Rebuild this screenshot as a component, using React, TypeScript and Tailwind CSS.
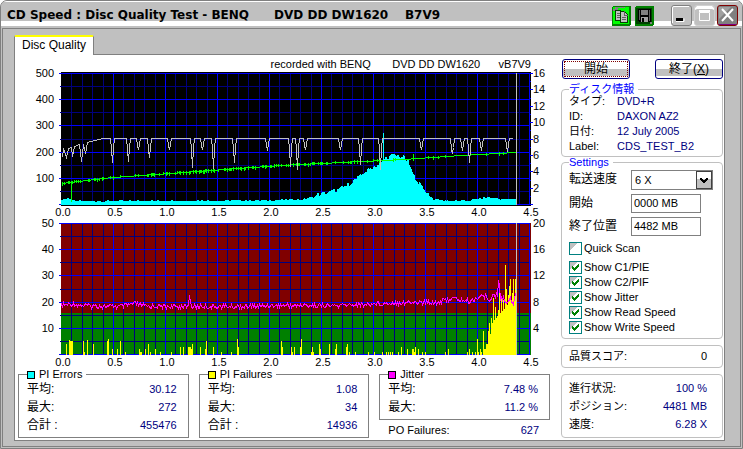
import type { ReactNode } from 'react'

type Point = [number, number]

const PLOT_LEFT = 46
const BASE_Y = 134

// dips of the write speed curve: [x, lowest y]
const writeDips: Point[] = [
  [51, 91], [67, 90], [77, 78], [88, 86], [108, 78], [131, 96], [141, 78], [152, 97],
  [173, 91], [206, 79], [229, 95], [236, 98], [244, 78], [279, 78], [299, 93], [319, 98],
  [360, 78], [391, 82], [401, 79], [408, 91], [420, 79], [446, 80],
]

const writeStart: Point[] = [
  [1, 86], [2, 77], [5, 86], [7, 77], [10, 76], [11, 85], [13, 75], [18, 73], [20, 90],
  [22, 73], [24, 82], [26, 71], [33, 69], [42, 67],
]

const readCurve: Point[] = [[0, 112], [51, 106], [109, 102], [219, 94], [342, 88], [400, 84], [454, 81]]

const pieCurve: Point[] = [
  [0, 5], [11, 5], [12, 3], [219, 4], [242, 5], [259, 9], [276, 13], [286, 18], [296, 25],
  [302, 30], [309, 35], [319, 39], [324, 45], [332, 48], [342, 46], [347, 41], [352, 28],
  [359, 18], [366, 10], [372, 5], [392, 3], [409, 4], [426, 7], [442, 5], [455, 5],
]

// [x, height]
const pifBars: Point[] = [
  [5, 11], [8, 15], [9, 14], [10, 14], [11, 14], [22, 14], [23, 3], [26, 15], [32, 11], [46, 14],
  [47, 16], [51, 6], [56, 6], [59, 14], [64, 3], [78, 6], [79, 3], [80, 3], [84, 6], [87, 11],
  [89, 3], [94, 6], [99, 3], [110, 3], [119, 8], [122, 8], [127, 8], [128, 8], [129, 8], [130, 6],
  [131, 11], [139, 8], [144, 6], [145, 14], [152, 8], [160, 3], [170, 3], [176, 16], [177, 8],
  [220, 14], [221, 8], [230, 8], [231, 3], [233, 8], [239, 8], [240, 16], [250, 3], [251, 8],
  [252, 3], [258, 11], [259, 6], [268, 11], [274, 6], [275, 11], [285, 8], [286, 11], [288, 3],
  [294, 3], [307, 3], [313, 3], [321, 3], [325, 3], [327, 3], [329, 3], [331, 3], [337, 3],
  [340, 8], [346, 6], [351, 6], [352, 6], [353, 3], [354, 8], [357, 6], [361, 3], [364, 3],
  [384, 3], [387, 6], [406, 3], [408, 6], [411, 3], [414, 3], [416, 16], [417, 3], [419, 6],
  [420, 3], [422, 24], [423, 6], [424, 6], [425, 11], [426, 11], [427, 8], [427, 24], [428, 32],
  [429, 14], [430, 37], [432, 57], [434, 48], [435, 37], [437, 45], [438, 62], [440, 58], [442, 55],
  [444, 90], [445, 66], [447, 60], [448, 69], [449, 76], [451, 62], [452, 76], [454, 76],
]

const pifFill: Point[] = [
  [427, 0], [427, 8], [429, 12], [430, 30], [433, 34], [436, 38], [440, 43], [444, 46],
  [448, 52], [455, 58], [455, 0],
]

const jitterCurve: Point[] = [
  [0, 84], [11, 82], [20, 84], [60, 85], [74, 82], [84, 85], [127, 85], [200, 85], [209, 84],
  [276, 84], [342, 81], [376, 81], [389, 77], [409, 80], [419, 74], [426, 77], [437, 74],
  [439, 77], [449, 79], [452, 81], [455, 66],
]

function noise(i: number) {
  const v = Math.sin(i * 12.9898) * 43758.5453
  return v - Math.floor(v)
}

function valueAt(curve: Point[], x: number) {
  for (let i = 1; i < curve.length; i++) {
    const [x0, y0] = curve[i - 1]
    const [x1, y1] = curve[i]
    if (x <= x1) return x1 === x0 ? y1 : y0 + ((y1 - y0) * (x - x0)) / (x1 - x0)
  }
  return curve[curve.length - 1][1]
}

function toPoints(points: Point[]) {
  return points.map(([x, y]) => `${PLOT_LEFT + x + 0.5},${y + 0.5}`).join(' ')
}

const writePoints: Point[] = [
  ...writeStart,
  ...writeDips.flatMap(([x, y]): Point[] => [[x - 2, 67], [x - 1, y > 80 ? 78 : 74], [x, y], [x + 1, y > 80 ? 76 : 73], [x + 2, 67]]),
  [451, 67],
]

const readPoints: Point[] = Array.from({ length: 455 }, (_, x) => [x, Math.round(valueAt(readCurve, x))])

const jitterPoints: Point[] = Array.from({ length: 455 }, (_, x) => {
  if (x === 128) return [x, 74]
  if (x === 129) return [x, 80]
  if (x === 437) return [x, 59]
  if (x === 438) return [x, 63]
  return [x, Math.round(valueAt(jitterCurve, x) + (noise(x) - 0.5) * (x > 400 ? 7 : 5))]
})

const pieHeights = Array.from({ length: 455 }, (_, x) => {
  const h = valueAt(pieCurve, x)
  return Math.round(h + noise(Math.floor(x / 2) + 7) * (h > 8 ? 4 : 1.6))
})

function Grid({ step, color, tick }: { step: number; color: string; tick: number }) {
  const columns = Array.from({ length: Math.round(9 * step) }, (_, i) => Math.round(((i + 1) * 52) / step))
  const rowsPerMajor = step > 1 ? 2 : 1
  const rows = Array.from({ length: 5 * rowsPerMajor + 1 }, (_, i) => Math.round((i * 26.2) / rowsPerMajor))
  return (
    <g fill={color}>
      {columns.map((x) => (
        <rect key={x} x={PLOT_LEFT + x} y="2" width="1" height="132" />
      ))}
      {rows.map((y) => (
        <rect key={y} x={PLOT_LEFT - tick} y={2 + y} width={468 + tick} height="1" />
      ))}
    </g>
  )
}

function Chart({
  label,
  leftLabels,
  rightLabels,
  rightTicks,
  background,
  children,
}: {
  label: string
  leftLabels: string[]
  rightLabels: string[]
  rightTicks?: boolean
  background: ReactNode
  children: ReactNode
}) {
  const rightStep = 131 / (rightTicks ? 8 : 5)
  return (
    <svg viewBox="0 0 540 148" role="img" aria-label={label} className="block w-full overflow-visible text-[11px]">
      <g shapeRendering="crispEdges" fill="none">
        {background}
        <Grid step={5} color="#000080" tick={1} />
        <Grid step={1} color="#0000ff" tick={2} />
        {rightTicks &&
          Array.from({ length: 17 }, (_, i) => (
            <path key={i} d={`M${i % 2 ? 515 : 514} ${2.5 + Math.round(i * 8.2)}H${i % 2 ? 516 : 518}`} stroke="#0000ff" />
          ))}
        {children}
      </g>
      {leftLabels.map((text, i) => (
        <text key={text} x="39" y={6 + Math.round(i * 26.2)} textAnchor="end">{text}</text>
      ))}
      {rightLabels.map((text, i) => (
        <text key={text} x="518" y={6 + Math.round(i * rightStep)}>{text}</text>
      ))}
      {['0.0', '0.5', '1.0', '1.5', '2.0', '2.5', '3.0', '3.5', '4.0', '4.5'].map((text, i) => (
        <text key={text} x={PLOT_LEFT + 2 + i * 52} y="145" textAnchor="middle">{text}</text>
      ))}
    </svg>
  )
}

function ErrorChart() {
  return (
    <Chart
      label="PI Errors"
      leftLabels={['500', '400', '300', '200', '100']}
      rightLabels={['16', '14', '12', '10', '8', '6', '4', '2']}
      rightTicks
      background={<rect x="46" y="1" width="470" height="134" fill="#000" />}
    >
      <path d={pieHeights.map((h, x) => `M${PLOT_LEFT + x + 0.5} ${BASE_Y}v${-h}`).join('')} stroke="#00ffff" />
      <path d={`M${PLOT_LEFT + 322 + 0.5} ${BASE_Y}V62`} stroke="#00ffff" />
      <polyline points={toPoints(readPoints)} stroke="#00ff00" />
      <path
        d={readPoints
          .filter(([x]) => noise(x + 3) > (x < 300 ? 0.6 : 0.9))
          .map(([x, y]) => `M${PLOT_LEFT + x + 0.5} ${y - 1}v${x > 35 && noise(x) > 0.7 ? 4 : 3}`)
          .join('')}
        stroke="#00ff00"
      />
      <path d={`M${PLOT_LEFT + 1.5} 111v4M${PLOT_LEFT + 10.5} 111V131M${PLOT_LEFT + 352.5} 83v7`} stroke="#00ff00" />
      <polyline points={toPoints(writePoints)} stroke="#c0c0c0" />
      <path d={`M${PLOT_LEFT + 455.5} 2V134`} stroke="#c0c0c0" />
    </Chart>
  )
}

function FailureChart() {
  return (
    <Chart
      label="PI Failures / Jitter"
      leftLabels={['50', '40', '30', '20', '10']}
      rightLabels={['20', '16', '12', '8', '4']}
      background={
        <>
          <rect x="46" y="2" width="470" height="90" fill="#800000" />
          <rect x="46" y="92" width="470" height="42" fill="#008000" />
        </>
      }
    >
      <polygon points={pifFill.map(([x, h]) => `${PLOT_LEFT + x},${BASE_Y - h}`).join(' ')} fill="#ffff00" />
      <path d={pifBars.map(([x, h]) => `M${PLOT_LEFT + x + 0.5} ${BASE_Y}v${-h}`).join('')} stroke="#ffff00" />
      <polyline points={toPoints(jitterPoints)} stroke="#ff00ff" />
      <path d={`M${PLOT_LEFT + 455.5} 2V134`} stroke="#c0c0c0" />
    </Chart>
  )
}

function StatBox({ title, swatch, rows }: { title: string; swatch: string; rows: string[][] }) {
  return (
    <fieldset className="min-w-0 border border-[#808080] pb-[3px] pl-2 pr-[11px]">
      <legend className="flex items-center gap-1 pr-1 leading-[11px]">
        <span className={`size-2 border border-black ${swatch}`} />
        {title}
      </legend>
      <dl>
        {rows.map(([name, value]) => (
          <div key={name} className="flex h-[18px] items-center justify-between">
            <dt className="text-[12px]">{name}</dt>
            <dd className="text-[#000080]">{value}</dd>
          </div>
        ))}
      </dl>
    </fieldset>
  )
}

function Check({ label, checked }: { label: string; checked?: boolean }) {
  return (
    <label className="flex h-[15px] items-center gap-[2px]">
      <span className="relative size-[13px]">
        <input
          type="checkbox"
          defaultChecked={checked}
          className="peer block size-[13px] appearance-none border border-[#008080] bg-[linear-gradient(135deg,#c0c0c0_36%,#fff_36%)]"
        />
        <svg viewBox="0 0 13 13" className="pointer-events-none absolute inset-0 hidden peer-checked:block" shapeRendering="crispEdges">
          <path d="M3 5h1v1h1v1h1v-1h1v-1h1v-1h1v-1h1v3h-1v1h-1v1h-1v1h-1v1h-1v-1h-1v-1h-1z" fill="#008000" />
        </svg>
      </span>
      {label}
    </label>
  )
}

function PositionField({ id, label, value }: { id: string; label: string; value: string }) {
  return (
    <div className="mt-1 flex h-[19px] items-center">
      <label htmlFor={id} className="w-[62px] text-[12px]">{label}</label>
      <input id={id} defaultValue={value} className="h-[19px] w-[70px] border border-[#808080] bg-white px-[2px] pb-[2px] outline-none" />
    </div>
  )
}

const discInfo = [
  ['タイプ:', 'DVD+R'],
  ['ID:', 'DAXON AZ2'],
  ['日付:', '12 July 2005'],
  ['Label:', 'CDS_TEST_B2'],
]

const progress = [
  ['進行状況:', '100 %'],
  ['ポジション:', '4481 MB'],
  ['速度:', '6.28 X'],
]

function TitleBar() {
  return (
    <header className="flex h-[27px] items-center bg-[linear-gradient(#fff_1px,#c0c0c0_1px,#c0c0c0_20px,#fff_20px,#fff_25px,#c0c0c0_25px)] pl-[6px] pr-1 pt-[2px]">
      <h1 className="flex-1 whitespace-pre font-['DejaVu_Sans'] text-[12px] font-bold">
        {'CD Speed : Disc Quality Test - BENQ      DVD DD DW1620    B7V9'}
      </h1>
      <div className="flex items-center">
        <button aria-label="Copy" className="mr-1">
          <svg width="19" height="20" viewBox="0 0 19 20" shapeRendering="crispEdges">
            <rect width="19" height="20" rx="2" fill="#008000" />
            <rect x="1" y="1" width="16" height="17" rx="1" fill="#00ff00" />
            <path d="M1 5v-2h2v-2h10v1h-7v2h-3v1z" fill="#808080" />
            <path d="M3.5 4.5h5l2 2v8h-7z" fill="#c0c0c0" stroke="#004000" />
            <path d="M8.5 5.5h4l3 3v8h-7z" fill="#c0c0c0" stroke="#004000" />
            <path d="M12.5 5v4h3M5 7.5h3M5 9.5h3M5 11.5h3M10 11.5h4M10 13.5h4" fill="none" stroke="#606060" />
          </svg>
        </button>
        <button aria-label="Save" className="mr-[17px]">
          <svg width="19" height="20" viewBox="0 0 19 20" shapeRendering="crispEdges">
            <rect width="19" height="20" rx="2" fill="#008000" />
            <rect x="1" y="2" width="16" height="16" fill="#004000" />
            <path d="M3 3h13v13h-12l-1-1z" fill="#000" />
            <path d="M4 4h1v10h-1zM14 4h1v11h-1z" fill="#606060" />
            <path d="M6 4h7v5h-7z" fill="#808080" />
            <path d="M6 11h7v5h-7z" fill="#a0a0a0" />
            <path d="M7 12h2v4h-2z" fill="#000" />
            <path d="M15 16h2v2h-2z" fill="#808080" />
          </svg>
        </button>
        <button aria-label="Minimize" className="mr-[2px]">
          <svg width="21" height="21" viewBox="0 0 21 21">
            <rect x="0.5" y="0.5" width="20" height="20" rx="2.5" fill="#c0c0c0" stroke="#808080" />
            <path d="M1.5 18V3Q1.5 1.5 3 1.5H18" fill="none" stroke="#fff" />
            <path d="M5 13h7v3h-7z" fill="#000" />
            <path d="M5 16.5h8v-3" fill="none" stroke="#fff" />
          </svg>
        </button>
        <button aria-label="Maximize" className="mr-[2px]">
          <svg width="21" height="21" viewBox="0 0 21 21">
            <rect x="0.5" y="0.5" width="20" height="20" rx="2.5" fill="#c0c0c0" stroke="#d0d0d0" />
            <path d="M1 5V3l2-2h15l2 2v2l-2-1H3z" fill="#fff" />
            <path d="M5.5 7.5h10v8h-10z" fill="none" stroke="#fff" />
            <path d="M5 6h11" stroke="#fff" strokeWidth="2" />
          </svg>
        </button>
        <button aria-label="Close">
          <svg width="21" height="21" viewBox="0 0 21 21">
            <rect x="0.5" y="0.5" width="20" height="20" rx="2.5" fill="#808080" stroke="#800000" />
            <path d="M2 19.5h17" stroke="#800080" />
            <path d="M2 14V2h12z" fill="#a0a0a0" />
            <path d="M5 4l11 12M16 4L5 16" stroke="#fff" strokeWidth="2" />
          </svg>
        </button>
      </div>
    </header>
  )
}

export default function App() {
  return (
    <div className="flex min-h-screen flex-col overflow-hidden rounded-t-[7px] border border-[#808080] bg-[#c0c0c0] font-['Liberation_Sans','Noto_Sans_CJK_JP',sans-serif] text-[11px] leading-[15px] text-black">
      <TitleBar />
      <div className="mx-px mb-px flex flex-1 flex-col border border-[#808080] pb-[5px] pl-[11px] pr-[15px] pt-[6px]">
        <div role="tablist" className="flex">
          <button role="tab" aria-selected="true" className="relative -mb-px h-5 rounded-t-[2px] border-x border-t-2 border-x-[#808080] border-t-[#ffff00] bg-white px-[7px] pb-[2px] text-[12px]">
            Disc Quality
          </button>
        </div>
        <main className="flex flex-1 border border-[#808080] bg-white">
          <div className="min-w-0 flex-1">
            <p className="h-4 whitespace-pre pr-6 pt-[2px] text-right">
              {'recorded with BENQ       DVD DD DW1620      vB7V9'}
            </p>
            <div className="flex flex-col gap-[2px]">
              <ErrorChart />
              <FailureChart />
            </div>
            <div className="grid grid-cols-3 gap-[10px] pl-[3px] pr-[5px]">
              <StatBox title="PI Errors" swatch="bg-[#00ffff]" rows={[['平均:', '30.12'], ['最大:', '272'], ['合計 :', '455476']]} />
              <StatBox title="PI Failures" swatch="bg-[#ffff00]" rows={[['平均:', '1.08'], ['最大:', '34'], ['合計 :', '14936']]} />
              <div>
                <StatBox title="Jitter" swatch="bg-[#ff00ff]" rows={[['平均:', '7.48 %'], ['最大:', '11.2 %']]} />
                <dl className="flex items-center justify-between pl-[9px] pr-[11px] pt-[3px]">
                  <dt>PO Failures:</dt>
                  <dd className="text-[#000080]">627</dd>
                </dl>
              </div>
            </div>
          </div>

          <aside className="ml-[6px] w-[163px] pr-px pt-1">
            <div className="flex justify-between pl-px">
              <button className="h-5 w-[68px] rounded-[3px] border border-[#000080] bg-[linear-gradient(#fff_9px,#c0c0c0_9px,#c0c0c0_16px,#fff_16px)] p-px">
                <span className="flex h-4 items-center justify-center border border-dotted border-[#800000] text-[12px]">開始</span>
              </button>
              <button className="h-5 w-[68px] rounded-[3px] border border-[#000080] bg-[linear-gradient(#fff_9px,#c0c0c0_9px,#c0c0c0_16px,#fff_16px)] text-[12px]">
                終了(<u>X</u>)
              </button>
            </div>

            <fieldset className="mt-[5px] rounded-[4px] border border-[#c0c0c0] pb-[2px] pl-[7px]">
              <legend className="pr-1 leading-[10px] text-[#0000ff]">ディスク情報</legend>
              <dl>
                {discInfo.map(([name, value]) => (
                  <div key={name} className="flex h-[15px] items-center">
                    <dt className="w-12">{name}</dt>
                    <dd className="text-[#000080]">{value}</dd>
                  </div>
                ))}
              </dl>
            </fieldset>

            <fieldset className="rounded-[4px] border border-[#c0c0c0] pb-[3px] pl-[7px]">
              <legend className="pr-1 leading-[10px] text-[#0000ff]">Settings</legend>
              <div className="flex h-[23px] items-end">
                <label htmlFor="speed" className="w-[62px] self-center pt-[2px] text-[12px]">転送速度</label>
                <div className="relative">
                  <select id="speed" className="block h-5 w-[82px] appearance-none border border-[#808080] bg-white pl-[3px] outline-none">
                    <option>6 X</option>
                  </select>
                  <svg width="16" height="18" viewBox="0 0 16 18" shapeRendering="crispEdges" className="pointer-events-none absolute right-px top-px">
                    <rect x="0.5" y="0.5" width="15" height="17" fill="#c0c0c0" stroke="#404040" />
                    <path d="M1 1h14v7h-14z" fill="#fff" />
                    <path d="M4 7h2v1h1v1h2v-1h1v-1h2v2h-1v1h-1v1h-1v1h-2v-1h-1v-1h-1v-1h-1z" fill="#000" />
                  </svg>
                </div>
              </div>
              <PositionField id="start" label="開始" value="0000 MB" />
              <PositionField id="end" label="終了位置" value="4482 MB" />
              <div className="pt-[5px]">
                <Check label="Quick Scan" />
              </div>
              <div className="pt-1">
                <Check label="Show C1/PIE" checked />
                <Check label="Show C2/PIF" checked />
                <Check label="Show Jitter" checked />
                <Check label="Show Read Speed" checked />
                <Check label="Show Write Speed" checked />
              </div>
            </fieldset>

            <dl className="mt-[6px] flex h-[23px] items-center justify-between rounded-[4px] border border-[#c0c0c0] pl-[7px] pr-[15px]">
              <dt>品質スコア:</dt>
              <dd>0</dd>
            </dl>

            <dl className="mt-[6px] rounded-[4px] border border-[#c0c0c0] py-1 pl-[7px] pr-[15px]">
              {progress.map(([name, value]) => (
                <div key={name} className="flex h-[18px] items-center justify-between">
                  <dt>{name}</dt>
                  <dd className="text-[#000080]">{value}</dd>
                </div>
              ))}
            </dl>
          </aside>
        </main>
      </div>
    </div>
  )
}
